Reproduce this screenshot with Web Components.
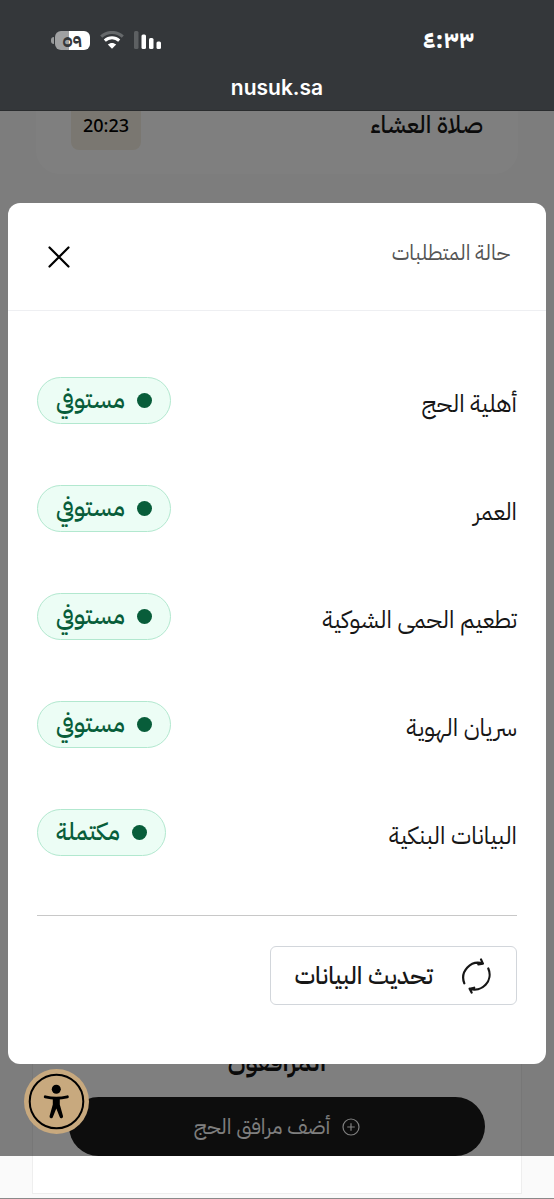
<!DOCTYPE html>
<html lang="ar" dir="rtl">
<head>
<meta charset="utf-8">
<meta name="viewport" content="width=device-width, initial-scale=1">
<title>nusuk.sa</title>
<style>
    html, body {
        height: 100%;
        margin: 0;
    }
    body {
        background: #fafafa;
        color: #161616;
        font-family: "IBM Plex Sans Arabic", "Noto Sans Arabic", "Noto Sans", "DejaVu Sans", sans-serif;
        font-size: 24px;
        line-height: 32px;
    }
</style>
</head>
<body>
<nusuk-app></nusuk-app>

<script>
/**
 * Base commune : attache le shadow root et y place le style et le contenu
 */
class BaseElement extends HTMLElement {
    constructor() {
        super();
        const root = this.attachShadow({mode: 'open'});
        root.innerHTML = `${this.buildStyle()}${this.buildContent()}`;
    }
}

/**
 * Barre du haut : heure, réseau, batterie et adresse du site
 */
class StatusBar extends BaseElement {
    buildStyle() {
        return `
            <style>
                :host {
                    display: block;
                    box-sizing: border-box;
                    padding: 24px 0 6px;
                    background: #34373a;
                    border-bottom: 1px solid #2a2c2e;
                    color: #fff;
                }
                .top {
                    display: flex;
                    align-items: center;
                    justify-content: space-between;
                    padding: 0 80px 0 51px;
                }
                .time {
                    font-weight: 700;
                }
                .icons {
                    display: flex;
                    direction: ltr;
                    align-items: center;
                    gap: 10px;
                }
                .battery {
                    display: flex;
                    align-items: center;
                    gap: 1px;
                }
                .tip {
                    width: 3px;
                    height: 7px;
                    border-radius: 3px 0 0 3px;
                    background: #97999a;
                }
                .level {
                    width: 35px;
                    border-radius: 6px;
                    background: linear-gradient(to right, #a0a1a2 40%, #fff 40%);
                    color: #34373a;
                    font-size: 18px;
                    font-weight: 700;
                    line-height: 19px;
                    text-align: center;
                }
                svg { display: block; }
                .host {
                    margin-top: 16px;
                    font-family: Inter, "Liberation Sans", sans-serif;
                    font-size: 21px;
                    font-weight: 600;
                    text-align: center;
                }
            </style>`;
    }

    buildContent() {
        return `
            <div class="top">
                <span class="time" dir="ltr">٤:٣٣</span>
                <div class="icons">
                    <div class="battery"><span class="tip"></span><span class="level">٥٩</span></div>
                    <svg width="24" height="18" viewBox="0 0 24 18" fill="none">
                        <path d="M1.200 5.600C7.200 0 16.800 0 22.800 5.600" stroke="#66696b" stroke-width="3"/>
                        <path d="M4.800 9.600C9 5.700 15 5.700 19.200 9.600" stroke="#fff" stroke-width="3"/>
                        <path d="M12 17.800l-4.200-4.300c2.500-2.100 5.900-2.100 8.400 0z" fill="#fff"/>
                    </svg>
                    <svg width="28" height="18" viewBox="0 0 28 18">
                        <rect x="0" y="0" width="4.500" height="18" rx="1.500" fill="#5d6062"/>
                        <rect x="7.500" y="3.500" width="4.500" height="14.500" rx="1.500" fill="#fff"/>
                        <rect x="15" y="7" width="4.500" height="11" rx="1.500" fill="#fff"/>
                        <rect x="22.500" y="10.500" width="4.500" height="7.500" rx="1.500" fill="#fff"/>
                    </svg>
                </div>
            </div>
            <div class="host" dir="ltr">nusuk.sa</div>`;
    }
}

/**
 * Carte d'une prière avec son horaire
 */
class PrayerCard extends BaseElement {
    buildStyle() {
        return `
            <style>
                :host {
                    display: flex;
                    align-items: flex-start;
                    justify-content: space-between;
                    margin: 0 36px;
                    padding: 0 35px 24px;
                    border-radius: 0 0 24px 24px;
                    background: #fff;
                    font-weight: 500;
                    line-height: 28px;
                }
                .time {
                    padding: 0 12px 10px;
                    border-radius: 0 0 8px 8px;
                    background: #f5efe2;
                    color: #000;
                    font-family: "Noto Sans", sans-serif;
                    font-size: 18px;
                    line-height: 29px;
                }
            </style>`;
    }

    buildContent() {
        return `
            <slot></slot>
            <time class="time">${this.getAttribute('time') || ''}</time>`;
    }
}

/**
 * Section des accompagnateurs
 */
class CompanionsCard extends BaseElement {
    buildStyle() {
        return `
            <style>
                :host {
                    display: block;
                    margin: 0 32px 4px;
                    padding: 0 36px 37px;
                    border: 1px solid #eee;
                    background: #fff;
                }
                h2 {
                    margin: 0 0 14px;
                    font-size: 26px;
                    font-weight: 600;
                    line-height: 40px;
                    text-align: center;
                }
                button {
                    display: flex;
                    align-items: center;
                    justify-content: center;
                    gap: 12px;
                    width: 100%;
                    height: 59px;
                    border: 0;
                    border-radius: 30px;
                    background: #1a1a1a;
                    color: #fff;
                    font: inherit;
                    font-size: 21px;
                }
            </style>`;
    }

    buildContent() {
        return `
            <h2>المرافقون</h2>
            <button type="button">
                <svg width="18" height="18" viewBox="0 0 18 18" fill="none" stroke="currentColor" stroke-width="1.200">
                    <circle cx="9" cy="9" r="8"/>
                    <path d="M9 5.200v7.600M5.200 9h7.600"/>
                </svg>
                <span>أضف مرافق الحج</span>
            </button>`;
    }
}

/**
 * Ligne d'une condition : libellé passé en slot, état en attribut
 */
class RequirementRow extends BaseElement {
    buildStyle() {
        return `
            <style>
                :host {
                    display: flex;
                    align-items: center;
                    justify-content: space-between;
                    height: 108px;
                }
                .label { padding-top: 8px; }
                .badge {
                    display: flex;
                    align-items: center;
                    gap: 12px;
                    box-sizing: border-box;
                    height: 47px;
                    padding: 0 18px;
                    border: 1px solid #b2e8cf;
                    border-radius: 24px;
                    background: #ecfdf5;
                    color: #085d3a;
                    font-weight: 500;
                }
                .badge::before {
                    content: "";
                    width: 15px;
                    height: 15px;
                    border-radius: 50%;
                    background: currentColor;
                }
            </style>`;
    }

    buildContent() {
        return `
            <span class="label"><slot></slot></span>
            <span class="badge">${this.getAttribute('status') || ''}</span>`;
    }
}

/**
 * Fenêtre modale : titre, contenu et actions
 */
class StatusDialog extends BaseElement {
    buildStyle() {
        return `
            <style>
                :host {
                    display: block;
                    border-radius: 12px;
                    background: #fff;
                }
                header {
                    display: flex;
                    align-items: center;
                    justify-content: space-between;
                    box-sizing: border-box;
                    height: 108px;
                    padding: 0 36px;
                    border-bottom: 1px solid #eeeff2;
                }
                h1 {
                    margin: 0;
                    padding-bottom: 8px;
                    color: #555;
                    font-size: 21px;
                    font-weight: 400;
                }
                .close {
                    padding: 4px;
                    border: 0;
                    background: none;
                    color: #000;
                }
                svg { display: block; }
                .body { padding: 35px 29px 0; }
                footer {
                    margin: 29px 29px 0;
                    padding: 30px 0 59px;
                    border-top: 1px solid #c8c8c8;
                }
            </style>`;
    }

    buildContent() {
        return `
            <header>
                <h1>${this.getAttribute('heading') || ''}</h1>
                <button class="close" type="button" aria-label="إغلاق">
                    <svg width="22" height="22" viewBox="0 0 22 22" fill="none" stroke="currentColor" stroke-width="2.200" stroke-linecap="round">
                        <path d="M1.500 1.500l19 19M20.500 1.500l-19 19"/>
                    </svg>
                </button>
            </header>
            <div class="body"><slot></slot></div>
            <footer><slot name="actions"></slot></footer>`;
    }
}

/**
 * Bouton de mise à jour des données
 */
class RefreshButton extends BaseElement {
    buildStyle() {
        return `
            <style>
                :host { display: flex; }
                button {
                    display: flex;
                    align-items: center;
                    gap: 28px;
                    height: 59px;
                    padding: 0 23px;
                    border: 1px solid #d2d6db;
                    border-radius: 6px;
                    background: #fff;
                    color: #161616;
                    font: inherit;
                    font-weight: 500;
                }
            </style>`;
    }

    buildContent() {
        return `
            <button type="button">
                <svg width="32" height="36" viewBox="0 0 32 36" fill="none" stroke="currentColor" stroke-width="2.200" stroke-linecap="round" stroke-linejoin="round">
                    <path d="M3.300 25.300A15 15 0 0 1 21.900 5.600M20 1.400l1.900 4.200-4.600.8"/>
                    <path d="M27.300 10.500A15 15 0 0 1 8.600 30.700M10.600 34.600l-2-3.900 4.600-1"/>
                </svg>
                <slot></slot>
            </button>`;
    }
}

/**
 * Bouton d'accessibilité flottant
 */
class AccessibilityButton extends BaseElement {
    buildStyle() {
        return `
            <style>
                :host { display: block; }
                button {
                    display: block;
                    padding: 0;
                    border: 0;
                    border-radius: 50%;
                    background: #c8a97e;
                    color: #000;
                }
                svg { display: block; }
            </style>`;
    }

    buildContent() {
        return `
            <button type="button" aria-label="إمكانية الوصول">
                <svg width="65" height="65" viewBox="0 0 65 65">
                    <circle cx="32.500" cy="32.500" r="26.800" fill="none" stroke="currentColor" stroke-width="2"/>
                    <circle cx="32.300" cy="20.200" r="4.500" fill="currentColor"/>
                    <path d="M21.300 27.900c7.300 1.700 14.700 1.700 22 0" fill="none" stroke="currentColor" stroke-width="3" stroke-linecap="round"/>
                    <path d="M28.800 28h7v7.500l3.200 11.500a1.700 1.700 0 0 1-3.300 1l-3.400-8.500-3.400 8.500a1.700 1.700 0 0 1-3.300-1l3.200-11.500z" fill="currentColor"/>
                </svg>
            </button>`;
    }
}

/**
 * Page complète : contenu de fond, voile et fenêtre par-dessus
 */
class NusukApp extends BaseElement {
    buildStyle() {
        return `
            <style>
                :host {
                    display: flex;
                    flex-direction: column;
                    min-height: 100%;
                }
                main {
                    position: relative;
                    display: flex;
                    flex: 1;
                    flex-direction: column;
                    justify-content: space-between;
                    border-bottom: 1px solid #8a8a8a;
                }
                .overlay {
                    position: absolute;
                    inset: 0 0 42px;
                    padding: 92px 8px 0;
                    background: rgba(0, 0, 0, .5);
                }
                accessibility-button {
                    position: absolute;
                    bottom: 64px;
                    left: 24px;
                }
            </style>`;
    }

    buildContent() {
        return `
            <status-bar></status-bar>
            <main>
                <prayer-card time="20:23">صلاة العشاء</prayer-card>
                <companions-card></companions-card>
                <div class="overlay">
                    <status-dialog role="dialog" heading="حالة المتطلبات">
                        <requirement-row status="مستوفي">أهلية الحج</requirement-row>
                        <requirement-row status="مستوفي">العمر</requirement-row>
                        <requirement-row status="مستوفي">تطعيم الحمى الشوكية</requirement-row>
                        <requirement-row status="مستوفي">سريان الهوية</requirement-row>
                        <requirement-row status="مكتملة">البيانات البنكية</requirement-row>
                        <refresh-button slot="actions">تحديث البيانات</refresh-button>
                    </status-dialog>
                </div>
                <accessibility-button></accessibility-button>
            </main>`;
    }
}

customElements.define('status-bar', StatusBar);
customElements.define('prayer-card', PrayerCard);
customElements.define('companions-card', CompanionsCard);
customElements.define('requirement-row', RequirementRow);
customElements.define('status-dialog', StatusDialog);
customElements.define('refresh-button', RefreshButton);
customElements.define('accessibility-button', AccessibilityButton);
customElements.define('nusuk-app', NusukApp);
</script>
</body>
</html>
